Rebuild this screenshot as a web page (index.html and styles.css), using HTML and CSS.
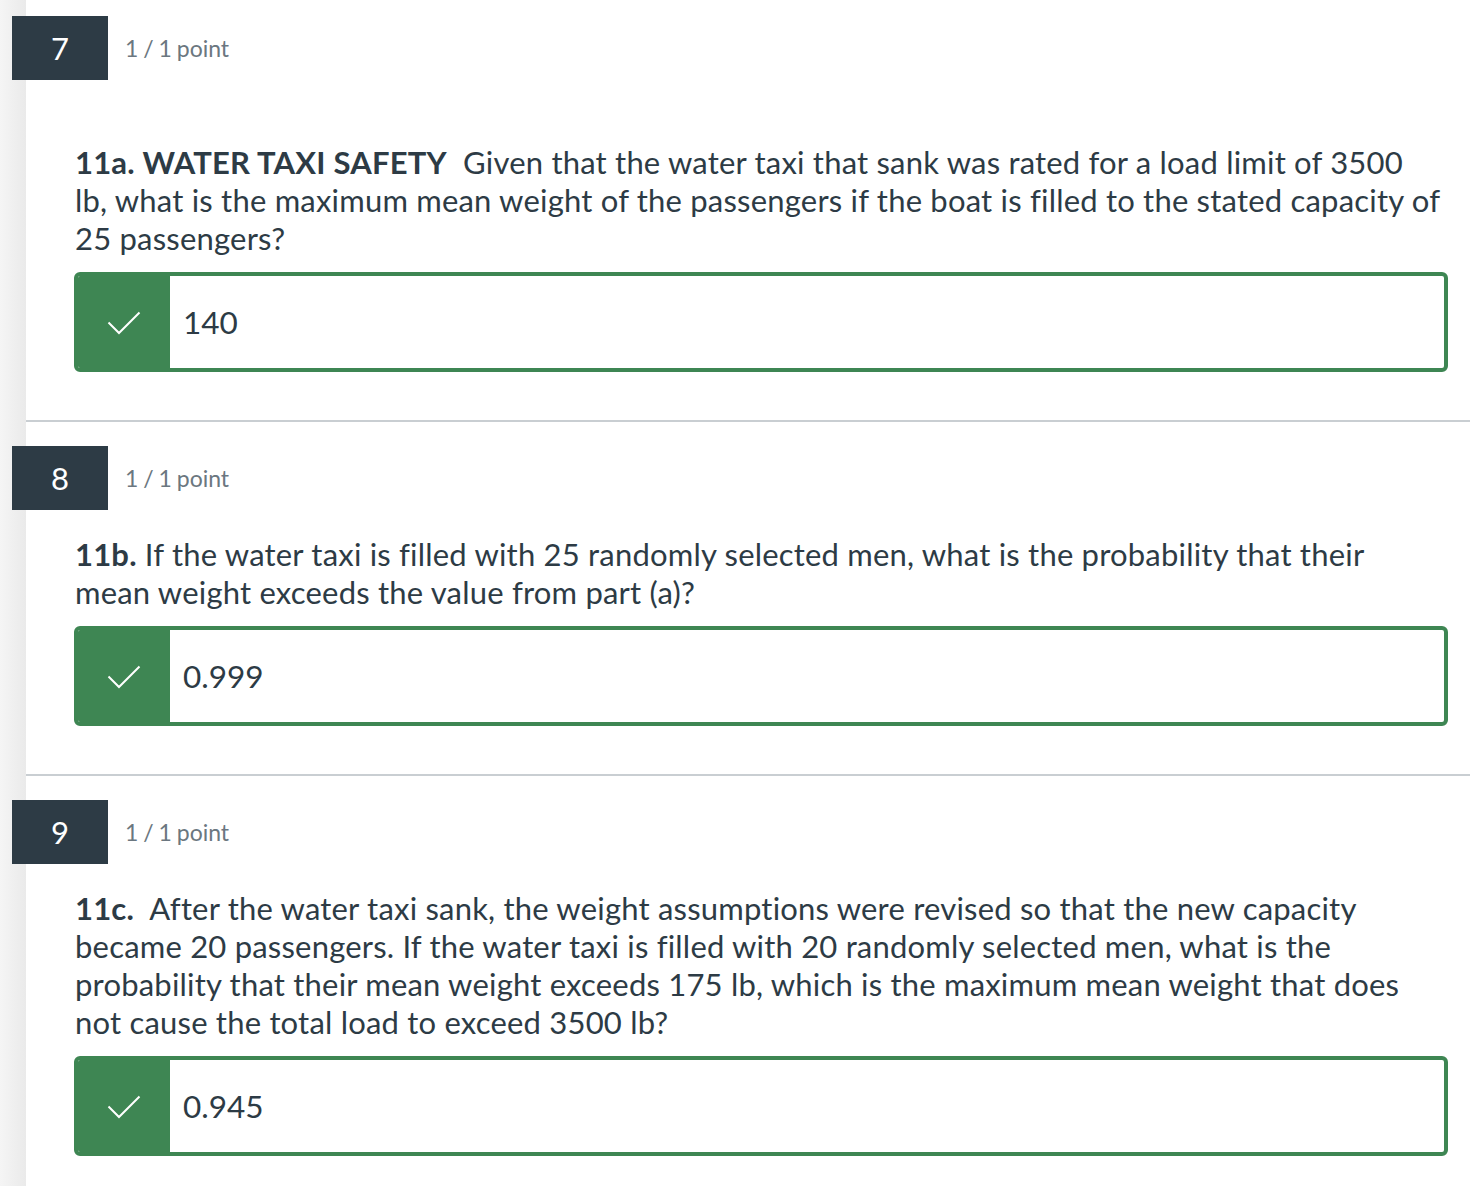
FILE: index.html
```html
<!DOCTYPE html>
<html lang="en">
<head>
<meta charset="utf-8">
<title>Quiz results</title>
<link rel="stylesheet" href="styles.css">
</head>
<body>
<main class="quiz">
  <section class="question">
    <div class="q-head">
      <div class="q-num">7</div>
      <div class="q-points">1 / 1 point</div>
    </div>
    <p class="q-text q-text--spaced"><strong>11a. WATER TAXI SAFETY</strong>&nbsp; Given that the water taxi that sank was rated for a load limit of 3500 lb, what is the maximum mean weight of the passengers if the boat is filled to the stated capacity of 25 passengers?</p>
    <div class="answer">
      <div class="answer-check"><svg width="34" height="24" viewBox="0 0 34 24"><path d="M1.5 11.5 L12 22 L32.5 1.5" fill="none" stroke="#fff" stroke-width="2"/></svg></div>
      <div class="answer-value">140</div>
    </div>
  </section>
  <hr class="divider">
  <section class="question">
    <div class="q-head">
      <div class="q-num">8</div>
      <div class="q-points">1 / 1 point</div>
    </div>
    <p class="q-text"><strong>11b.</strong> If the water taxi is filled with 25 randomly selected men, what is the probability that their mean weight exceeds the value from part (a)?</p>
    <div class="answer">
      <div class="answer-check"><svg width="34" height="24" viewBox="0 0 34 24"><path d="M1.5 11.5 L12 22 L32.5 1.5" fill="none" stroke="#fff" stroke-width="2"/></svg></div>
      <div class="answer-value">0.999</div>
    </div>
  </section>
  <hr class="divider">
  <section class="question">
    <div class="q-head">
      <div class="q-num">9</div>
      <div class="q-points">1 / 1 point</div>
    </div>
    <p class="q-text"><strong>11c.</strong>&nbsp; After the water taxi sank, the weight assumptions were revised so that the new capacity became 20 passengers. If the water taxi is filled with 20 randomly selected men, what is the probability that their mean weight exceeds 175 lb, which is the maximum mean weight that does not cause the total load to exceed 3500 lb?</p>
    <div class="answer">
      <div class="answer-check"><svg width="34" height="24" viewBox="0 0 34 24"><path d="M1.5 11.5 L12 22 L32.5 1.5" fill="none" stroke="#fff" stroke-width="2"/></svg></div>
      <div class="answer-value">0.945</div>
    </div>
  </section>
</main>
</body>
</html>
```
FILE: styles.css
```css
html, body {
  margin: 0;
  padding: 0;
}
body {
  font-family: Lato, "Open Sans", sans-serif;
  color: #2d3b45;
  background: linear-gradient(to right, #f5f5f5, #eaeaea) 0 0 / 26px 100% no-repeat, #fff;
  min-height: 1186px;
}
.quiz {
  padding: 16px 0 0 12px;
}
.q-head {
  display: flex;
  align-items: center;
}
.q-num {
  width: 96px;
  height: 64px;
  background: #2d3b45;
  color: #fff;
  font-size: 31px;
  display: flex;
  align-items: center;
  justify-content: center;
}
.q-points {
  margin-left: 17px;
  font-size: 23px;
  word-spacing: -1px;
  color: #6b7780;
}
.q-text {
  margin: 25px 30px 0 63px;
  font-size: 31px;
  line-height: 38px;
  letter-spacing: 0.2px;
}
.q-text--spaced {
  margin-top: 63px;
}
.q-text strong {
  font-weight: 700;
}
.answer {
  margin: 15px 22px 0 62px;
  height: 100px;
  box-sizing: border-box;
  border: 4px solid #3e8653;
  border-radius: 6px;
  display: flex;
  overflow: hidden;
}
.answer-check {
  width: 92px;
  background: #3e8653;
  display: flex;
  align-items: center;
  justify-content: center;
}
.answer-check svg {
  margin-top: 2px;
}
.answer-value {
  padding-left: 13px;
  font-size: 31.5px;
  display: flex;
  align-items: center;
}
.divider {
  margin: 48px 0 24px 14px;
  border: 0;
  height: 2px;
  background: #c9ced2;
}
```
